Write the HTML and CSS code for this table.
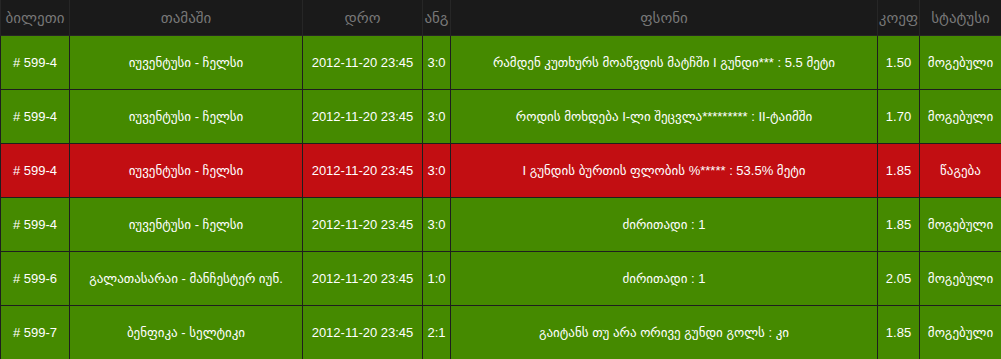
FILE: index.html
```html
<!DOCTYPE html>
<html lang="ka">
<head>
<meta charset="utf-8">
<title>ბილეთები</title>
<link rel="stylesheet" href="styles.css">
</head>
<body>
<table class="bets">
  <colgroup>
    <col class="c-ticket"><col class="c-game"><col class="c-time"><col class="c-score"><col class="c-bet"><col class="c-coef"><col class="c-status">
  </colgroup>
  <thead>
    <tr><th>ბილეთი</th><th>თამაში</th><th>დრო</th><th>ანგ</th><th>ფსონი</th><th>კოეფ</th><th>სტატუსი</th></tr>
  </thead>
  <tbody>
    <tr class="won"><td># 599-4</td><td>იუვენტუსი - ჩელსი</td><td>2012-11-20 23:45</td><td>3:0</td><td>რამდენ კუთხურს მოაწვდის მატჩში I გუნდი*** : 5.5 მეტი</td><td>1.50</td><td>მოგებული</td></tr>
    <tr class="won"><td># 599-4</td><td>იუვენტუსი - ჩელსი</td><td>2012-11-20 23:45</td><td>3:0</td><td>როდის მოხდება I-ლი შეცვლა********* : II-ტაიმში</td><td>1.70</td><td>მოგებული</td></tr>
    <tr class="lost"><td># 599-4</td><td>იუვენტუსი - ჩელსი</td><td>2012-11-20 23:45</td><td>3:0</td><td>I გუნდის ბურთის ფლობის %***** : 53.5% მეტი</td><td>1.85</td><td>წაგება</td></tr>
    <tr class="won"><td># 599-4</td><td>იუვენტუსი - ჩელსი</td><td>2012-11-20 23:45</td><td>3:0</td><td>ძირითადი : 1</td><td>1.85</td><td>მოგებული</td></tr>
    <tr class="won"><td># 599-6</td><td>გალათასარაი - მანჩესტერ იუნ.</td><td>2012-11-20 23:45</td><td>1:0</td><td>ძირითადი : 1</td><td>2.05</td><td>მოგებული</td></tr>
    <tr class="won"><td># 599-7</td><td>ბენფიკა - სელტიკი</td><td>2012-11-20 23:45</td><td>2:1</td><td>გაიტანს თუ არა ორივე გუნდი გოლს : კი</td><td>1.85</td><td>მოგებული</td></tr>
  </tbody>
</table>
</body>
</html>
```
FILE: styles.css
```css
html, body {
  margin: 0;
  padding: 0;
  background: #1a1a1a;
}
body {
  font-family: "Liberation Sans", "DejaVu Sans", sans-serif;
  font-size: 13px;
}
.bets {
  width: 1001px;
  table-layout: fixed;
  border-collapse: collapse;
}
.c-ticket { width: 69px; }
.c-game { width: 233px; }
.c-time { width: 120px; }
.c-score { width: 28px; }
.c-bet { width: 427px; }
.c-coef { width: 42px; }
.c-status { width: 82px; }
.bets th {
  height: 35px;
  padding: 0;
  background: #1a1a1a;
  color: #787878;
  font-size: 15px;
  font-weight: normal;
  text-align: center;
  border: 1px solid #262626;
  border-top: none;
  white-space: nowrap;
  overflow: hidden;
}
.bets td {
  height: 53px;
  padding: 0;
  color: #ffffff;
  text-align: center;
  border: 1px solid #1e1e1e;
  white-space: nowrap;
  overflow: hidden;
}
.won td { background: #458a00; }
.lost td { background: #c20e12; }
```
